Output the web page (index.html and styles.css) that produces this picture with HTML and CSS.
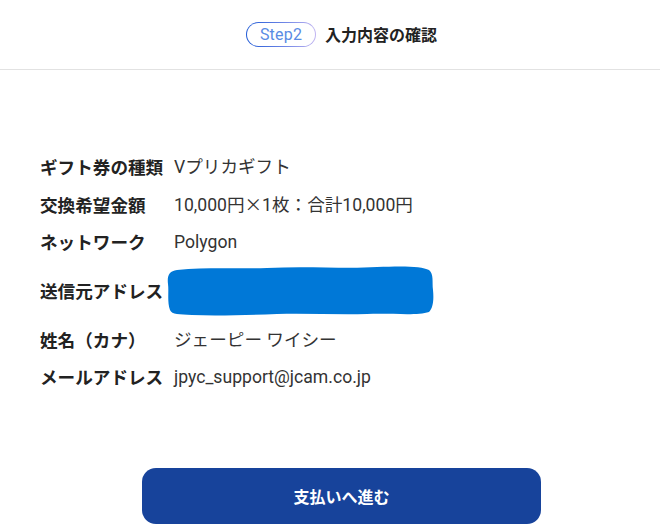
FILE: index.html
```html
<!DOCTYPE html>
<html lang="ja">
<head>
<meta charset="utf-8">
<title>入力内容の確認</title>
<link rel="stylesheet" href="styles.css">
</head>
<body>
<header class="header">
  <div class="header-inner">
    <span class="step-pill">Step2</span>
    <h1 class="title">入力内容の確認</h1>
  </div>
</header>
<main class="main">
  <dl class="details">
    <div class="row"><dt class="label">ギフト券の種類</dt><dd class="value">Vプリカギフト</dd></div>
    <div class="row"><dt class="label">交換希望金額</dt><dd class="value">10,000円<span class="cjk">×</span>1枚：合計10,000円</dd></div>
    <div class="row"><dt class="label">ネットワーク</dt><dd class="value">Polygon</dd></div>
    <div class="row row-tall"><dt class="label">送信元アドレス</dt><dd class="value value-redacted">
      <svg class="redact" width="268" height="50" viewBox="0 0 268 50" aria-hidden="true">
        <path d="M10 4 C40 1 70 3 100 2 C140 0 180 3 210 1 C235 0 255 0 262 4 C267 8 265 16 266 24 C267 34 266 42 262 46 C250 50 225 47 200 48 C170 49 140 47 110 48 C80 49 50 50 25 49 C12 48 5 49 3 44 C0 36 2 26 1 18 C0 10 2 5 10 4 Z" fill="#0078d7"/>
      </svg>
    </dd></div>
    <div class="row"><dt class="label">姓名（カナ）</dt><dd class="value">ジェーピー ワイシー</dd></div>
    <div class="row"><dt class="label">メールアドレス</dt><dd class="value">jpyc_support@jcam.co.jp</dd></div>
  </dl>
  <div class="actions">
    <button class="primary-btn" type="button">支払いへ進む</button>
  </div>
</main>
</body>
</html>
```
FILE: styles.css
```css
* { box-sizing: border-box; }
html, body { margin: 0; padding: 0; background: #fff; }
body {
  font-family: Roboto, "Noto Sans CJK JP", sans-serif;
  color: #222;
}
.header {
  height: 70px;
  border-bottom: 1px solid #e2e2e2;
  display: flex;
  align-items: center;
  justify-content: center;
  padding-left: 23px;
}
.header-inner {
  display: flex;
  align-items: center;
  gap: 9px;
  margin-top: -1px;
}
.step-pill {
  display: inline-flex;
  align-items: center;
  justify-content: center;
  width: 70px;
  height: 25px;
  border: 1px solid transparent;
  border-radius: 13px;
  background: linear-gradient(#fff, #fff) padding-box,
              linear-gradient(90deg, #1f5ad6 0%, #6f86e6 55%, #c2b6f2 100%) border-box;
  color: #5a8be4;
  font-family: Roboto, sans-serif;
  font-size: 16px;
  letter-spacing: 0.2px;
}
.title {
  margin: 0;
  font-family: "Noto Sans CJK JP", sans-serif;
  font-size: 16px;
  font-weight: 700;
  line-height: 22px;
  color: #222;
}
.main {
  padding: 84px 0 0 40px;
}
.details {
  margin: 0;
  display: flex;
  flex-direction: column;
  gap: 11px;
}
.row {
  display: grid;
  grid-template-columns: 134px 1fr;
  align-items: center;
  min-height: 26px;
}
.row-tall { min-height: 50px; }
.label {
  margin: 0;
  font-family: "Noto Sans CJK JP", sans-serif;
  font-weight: 700;
  font-size: 17.6px;
  line-height: 26px;
  color: #222;
  white-space: nowrap;
}
.value {
  margin: 0;
  font-family: Roboto, "Noto Sans CJK JP", sans-serif;
  font-size: 17.6px;
  line-height: 26px;
  color: #333;
  white-space: nowrap;
}
.cjk { font-family: "Noto Sans CJK JP", sans-serif; }
.value-redacted {
  margin-left: -7px;
  display: flex;
}
.redact { display: block; }
.actions {
  display: flex;
  padding: 78px 0 0 102px;
}
.primary-btn {
  width: 399px;
  height: 56px;
  border: none;
  border-radius: 14px;
  background: #17439b;
  color: #fff;
  font-family: "Noto Sans CJK JP", sans-serif;
  font-size: 16px;
  font-weight: 700;
  cursor: pointer;
}
```
